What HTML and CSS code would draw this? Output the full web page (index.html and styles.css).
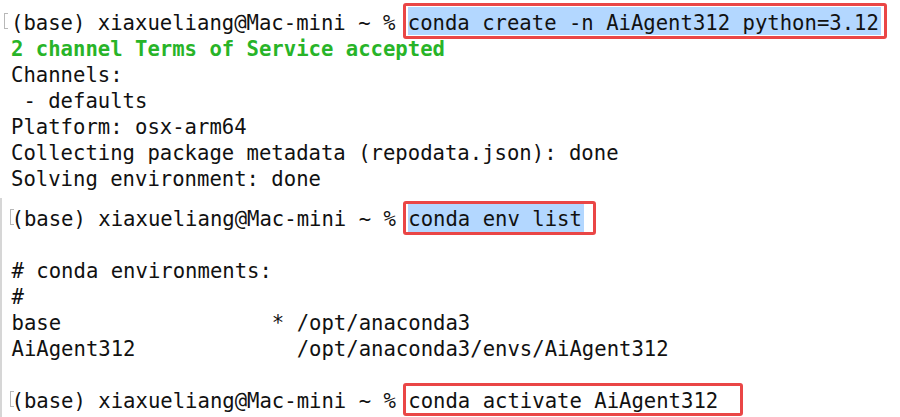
FILE: index.html
```html
<!DOCTYPE html>
<html lang="en">
<head>
<meta charset="utf-8">
<title>conda terminal</title>
<link rel="stylesheet" href="styles.css">
</head>
<body>
<main class="term">
  <section class="block block-one">
    <div class="line"><span class="mark"></span>(base) xiaxueliang@Mac-mini ~ %<span class="cmd cmd-one"><span class="sel sel-one">conda create -n AiAgent312 python=3.12</span></span></div>
    <div class="line ok">2 channel Terms of Service accepted</div>
    <div class="line">Channels:</div>
    <div class="line"> - defaults</div>
    <div class="line">Platform: osx-arm64</div>
    <div class="line">Collecting package metadata (repodata.json): done</div>
    <div class="line">Solving environment: done</div>
  </section>
  <section class="block block-two">
    <div class="line"><span class="mark mark-two"></span>(base) xiaxueliang@Mac-mini ~ %<span class="cmd cmd-two"><span class="sel">conda env list</span></span></div>
    <div class="line"> </div>
    <div class="line"># conda environments:</div>
    <div class="line">#</div>
    <div class="line">base                 * /opt/anaconda3</div>
    <div class="line">AiAgent312             /opt/anaconda3/envs/AiAgent312</div>
    <div class="line"> </div>
    <div class="line"><span class="mark mark-two"></span>(base) xiaxueliang@Mac-mini ~ %<span class="cmd cmd-three">conda activate AiAgent312</span></div>
  </section>
</main>
</body>
</html>
```
FILE: styles.css
```css
html, body {
  margin: 0;
  padding: 0;
  background: #ffffff;
  overflow: hidden;
}

.term {
  width: 900px;
  height: 417px;
  font-family: "DejaVu Sans Mono", "Liberation Mono", monospace;
  font-size: 20.6px;
  color: #111111;
}

.block {
  display: flex;
  flex-direction: column;
}

.line {
  white-space: pre;
  line-height: 26px;
}

.block-one {
  padding: 9.7px 0 0 11px;
}

.block-two {
  margin-top: 6.3px;
  padding: 8px 0 3px 9.5px;
  border-left: 2px solid #d6d6d6;
}

.ok {
  color: #28b428;
  font-weight: bold;
}

.mark {
  display: inline-block;
  width: 3px;
  height: 14px;
  margin: 0 3px 1px -7px;
  border: 1px solid #b8b8b8;
  border-right: 0;
}

.mark-two {
  margin-left: -2px;
  margin-right: -2px;
}

.cmd {
  display: inline-block;
  margin: -9px 0 -6px 7.4px;
  border: 3px solid #ea4646;
  border-radius: 3px;
  line-height: 26px;
  padding: 2px 3px 0 2px;
}

.cmd-one {
  padding-top: 4px;
  padding-bottom: 0;
}

.cmd-two {
  padding-right: 9.6px;
}

.cmd-three {
  line-height: 24px;
  padding: 3px 22px 0 2px;
}

.sel {
  background: #b3d7ff;
  padding: 3px 2px 1px 0;
}

.sel-one {
  padding-top: 4px;
  padding-bottom: 0;
}
```
